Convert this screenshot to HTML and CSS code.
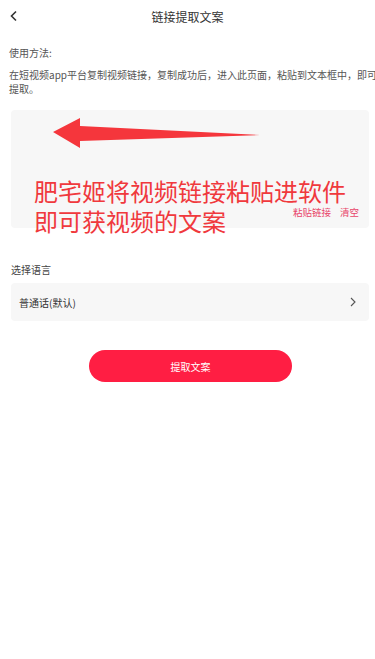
FILE: index.html
```html
<!DOCTYPE html>
<html lang="zh-CN">
<head>
    <meta charset="UTF-8">
    <title>链接提取文案</title>
    <link rel="stylesheet" href="styles.css">
</head>
<body>
    <div class="header">
        <span class="back">
            <svg width="10" height="12" viewBox="0 0 10 12"><path d="M7 1.5 L2.5 6 L7 10.5" fill="none" stroke="#333" stroke-width="1.6"/></svg>
        </span>
        <h1>链接提取文案</h1>
    </div>

    <div class="usage">
        <h3>使用方法:</h3>
        <p>在短视频app平台复制视频链接，复制成功后，进入此页面，粘贴到文本框中，即可提取。</p>
    </div>

    <div class="link-box">
        <div class="box-actions">
            <span>粘贴链接</span>
            <span>清空</span>
        </div>
        <!-- 标注 -->
        <svg class="mark-arrow" width="215" height="34" viewBox="0 0 215 34">
            <path d="M0 14 L27 0 L27 8 L207 17 L27 23 L27 30 Z" fill="#f5363c"/>
        </svg>
        <div class="mark-text">肥宅姬将视频链接粘贴进软件<br>即可获视频的文案</div>
    </div>

    <div class="lang">
        <div class="lang-label">选择语言</div>
        <div class="lang-row">
            <span>普通话(默认)</span>
            <svg width="8" height="10" viewBox="0 0 8 10"><path d="M2 1 L6 5 L2 9" fill="none" stroke="#555" stroke-width="1.1"/></svg>
        </div>
    </div>

    <div class="submit">
        <button>提取文案</button>
    </div>
</body>
</html>
```

FILE: styles.css
```css
body {
    margin: 0;
    overflow-x: hidden;
    background: #fff;
    font-family: "Noto Sans CJK SC", "Noto Sans", sans-serif;
    color: #333;
}

.header {
    height: 32px;
    display: flex;
    align-items: center;
    justify-content: center;
    position: relative;
}

.header h1 {
    margin: 0;
    font-size: 12px;
    font-weight: normal;
    color: #333;
}

.back {
    position: absolute;
    left: 9px;
    top: 10px;
    display: flex;
}

.usage {
    padding: 14px 0 0 9px;
}

.usage h3 {
    margin: 0 0 8px;
    font-size: 10px;
    line-height: 14px;
    font-weight: normal;
    color: #555;
}

.usage p {
    margin: 0 -3px 0 0;
    font-size: 10px;
    line-height: 14px;
    color: #555;
}

.link-box {
    position: relative;
    margin: 14px 6px 0 11px;
    height: 118px;
    background: #f7f7f7;
    border-radius: 4px;
}

.box-actions {
    position: absolute;
    right: 10px;
    bottom: 9px;
    display: flex;
    gap: 9px;
    font-size: 9.5px;
    color: #e8456a;
}

.mark-arrow {
    position: absolute;
    left: 42px;
    top: 8px;
}

.mark-text {
    position: absolute;
    left: 23px;
    top: 66px;
    font-size: 24px;
    line-height: 30px;
    color: #f0393d;
    white-space: nowrap;
}

.lang {
    padding: 0 6px 0 11px;
    margin-top: 35px;
}

.lang-label {
    font-size: 10px;
    line-height: 14px;
    color: #444;
    margin-bottom: 6px;
}

.lang-row {
    height: 38px;
    background: #f7f7f7;
    border-radius: 4px;
    display: flex;
    align-items: center;
    justify-content: space-between;
    padding: 0 12px 0 8px;
    font-size: 10px;
    color: #333;
}

.submit {
    display: flex;
    justify-content: center;
    margin-top: 29px;
    padding-left: 6px;
}

button {
    width: 203px;
    height: 32px;
    border: none;
    border-radius: 16px;
    background: #ff1e43;
    color: #fff;
    font-family: "Noto Sans CJK SC", sans-serif;
    font-size: 10px;
}
```
